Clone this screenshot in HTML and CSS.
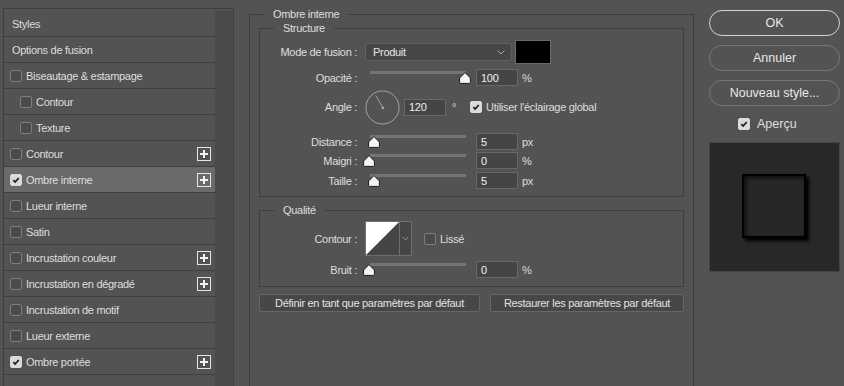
FILE: index.html
```html
<!DOCTYPE html>
<html lang="fr">
<head>
<meta charset="utf-8">
<title>Style de calque</title>
<link rel="stylesheet" href="styles.css">
</head>
<body>
<div class="dialog">
  <aside class="sidebar">
    <ul class="style-list">
      <li class="row plain">Styles</li>
      <li class="row plain">Options de fusion</li>
      <li class="row"><span class="check"></span>Biseautage &amp; estampage</li>
      <li class="row indent"><span class="check"></span>Contour</li>
      <li class="row indent"><span class="check"></span>Texture</li>
      <li class="row"><span class="check"></span>Contour<span class="plus"></span></li>
      <li class="row active"><span class="check on"><svg viewBox="0 0 12 12"><path d="M2.8 6.2 L5 8.4 L9.3 3.6"/></svg></span>Ombre interne<span class="plus"></span></li>
      <li class="row"><span class="check"></span>Lueur interne</li>
      <li class="row"><span class="check"></span>Satin</li>
      <li class="row"><span class="check"></span>Incrustation couleur<span class="plus"></span></li>
      <li class="row"><span class="check"></span>Incrustation en dégradé<span class="plus"></span></li>
      <li class="row"><span class="check"></span>Incrustation de motif</li>
      <li class="row"><span class="check"></span>Lueur externe</li>
      <li class="row"><span class="check on"><svg viewBox="0 0 12 12"><path d="M2.8 6.2 L5 8.4 L9.3 3.6"/></svg></span>Ombre portée<span class="plus"></span></li>
    </ul>
    <div class="scroll"></div>
  </aside>

  <main class="panel">
    <fieldset class="group outer">
      <legend>Ombre interne</legend>
      <fieldset class="group inner structure">
        <legend>Structure</legend>
        <div class="field f-mode">
          <span class="label">Mode de fusion :</span>
          <div class="select">Produit<svg class="chev" viewBox="0 0 8 5"><path d="M0.5 0.5 L4 4 L7.5 0.5"/></svg></div>
          <span class="swatch"></span>
        </div>
        <div class="field f-opacity">
          <span class="label">Opacité :</span>
          <div class="slider"><span class="track"></span><svg class="thumb" style="left:94px" viewBox="0 0 12 12"><path d="M6 0.6 L11.4 6 V10.4 Q11.4 11.4 10.4 11.4 H1.6 Q0.6 11.4 0.6 10.4 V6 Z"/></svg></div>
          <span class="input">100</span><span class="unit">%</span>
        </div>
        <div class="field f-angle">
          <span class="label">Angle :</span>
          <svg class="dial" viewBox="0 0 36 36"><circle cx="18" cy="18" r="17"/><path d="M18.5 18.5 L11 5.5"/><circle class="dot" cx="18.5" cy="18.5" r="1.4"/></svg>
          <span class="input">120</span><span class="deg">°</span>
          <span class="check on gl"><svg viewBox="0 0 12 12"><path d="M2.8 6.2 L5 8.4 L9.3 3.6"/></svg></span><span class="cb-label">Utiliser l'éclairage global</span>
        </div>
        <div class="field f-distance">
          <span class="label">Distance :</span>
          <div class="slider"><span class="track"></span><svg class="thumb" style="left:3px" viewBox="0 0 12 12"><path d="M6 0.6 L11.4 6 V10.4 Q11.4 11.4 10.4 11.4 H1.6 Q0.6 11.4 0.6 10.4 V6 Z"/></svg></div>
          <span class="input">5</span><span class="unit">px</span>
        </div>
        <div class="field f-choke">
          <span class="label">Maigri :</span>
          <div class="slider"><span class="track"></span><svg class="thumb" style="left:-2px" viewBox="0 0 12 12"><path d="M6 0.6 L11.4 6 V10.4 Q11.4 11.4 10.4 11.4 H1.6 Q0.6 11.4 0.6 10.4 V6 Z"/></svg></div>
          <span class="input">0</span><span class="unit">%</span>
        </div>
        <div class="field f-size">
          <span class="label">Taille :</span>
          <div class="slider"><span class="track"></span><svg class="thumb" style="left:3px" viewBox="0 0 12 12"><path d="M6 0.6 L11.4 6 V10.4 Q11.4 11.4 10.4 11.4 H1.6 Q0.6 11.4 0.6 10.4 V6 Z"/></svg></div>
          <span class="input">5</span><span class="unit">px</span>
        </div>
      </fieldset>

      <fieldset class="group inner quality">
        <legend>Qualité</legend>
        <div class="field f-contour">
          <span class="label">Contour :</span>
          <div class="contour">
            <svg class="curve" viewBox="0 0 33 33"><rect width="33" height="33" fill="#454545"/><polygon points="0,0 33,0 0,33" fill="#ffffff"/></svg>
            <span class="drop"><svg class="chev" viewBox="0 0 8 5"><path d="M0.5 0.5 L4 4 L7.5 0.5"/></svg></span>
          </div>
          <span class="check lisse"></span><span class="cb-label">Lissé</span>
        </div>
        <div class="field f-noise">
          <span class="label">Bruit :</span>
          <div class="slider"><span class="track"></span><svg class="thumb" style="left:-2px" viewBox="0 0 12 12"><path d="M6 0.6 L11.4 6 V10.4 Q11.4 11.4 10.4 11.4 H1.6 Q0.6 11.4 0.6 10.4 V6 Z"/></svg></div>
          <span class="input">0</span><span class="unit">%</span>
        </div>
      </fieldset>

      <div class="defaults">
        <button class="btn-flat b-set">Définir en tant que paramètres par défaut</button>
        <button class="btn-flat b-reset">Restaurer les paramètres par défaut</button>
      </div>
    </fieldset>
  </main>

  <aside class="actions">
    <button class="pill primary">OK</button>
    <button class="pill">Annuler</button>
    <button class="pill">Nouveau style...</button>
    <div class="preview-toggle"><span class="check on"><svg viewBox="0 0 12 12"><path d="M2.8 6.2 L5 8.4 L9.3 3.6"/></svg></span><span>Aperçu</span></div>
    <div class="preview"><div class="sample"></div></div>
  </aside>
</div>
</body>
</html>
```
FILE: styles.css
```css
* { box-sizing: border-box; }
html, body { margin: 0; height: 100%; overflow: hidden; }
body {
  background: #535353;
  font-family: "Liberation Sans", Arial, sans-serif;
  font-size: 11px;
  letter-spacing: -0.3px;
  color: #dedede;
}
.dialog { display: flex; align-items: flex-start; padding-left: 3px; }

/* ---------- sidebar ---------- */
.sidebar {
  width: 231px;
  height: 400px;
  margin-top: 8px;
  border: 1px solid #3f3f3f;
  padding-top: 2px;
  display: flex;
  flex-shrink: 0;
}
.style-list { list-style: none; margin: 0; padding: 0; width: 211px; }
.scroll { width: 18px; background: #4a4a4a; }
.row {
  height: 26px;
  border-bottom: 1px solid #3e3e3e;
  display: flex;
  align-items: center;
  gap: 4px;
  padding-left: 6px;
  white-space: nowrap;
}
.row.plain { padding-left: 8px; }
.row.indent { padding-left: 16px; }
.row.active { background: #6a6a6a; }

.check {
  width: 12px; height: 12px;
  border: 1px solid #7e7e7e;
  border-radius: 2px;
  background: #4b4b4b;
  flex-shrink: 0;
  display: inline-flex;
}
.check.on { background: #dadada; border-color: #dadada; }
.check svg { width: 10px; height: 10px; }
.check path { fill: none; stroke: #1e1e1e; stroke-width: 2.1; }

.plus {
  margin-left: auto;
  margin-right: 4px;
  width: 14px; height: 14px;
  border: 1px solid #e4e4e4;
  position: relative;
  flex-shrink: 0;
}
.plus::before, .plus::after { content: ""; position: absolute; background: #f2f2f2; }
.plus::before { left: 2px; right: 2px; top: 5px; height: 2px; }
.plus::after { top: 2px; bottom: 2px; left: 5px; width: 2px; }

/* ---------- main panel ---------- */
.panel { margin-left: 15px; margin-top: 7px; width: 445px; flex-shrink: 0; }
fieldset.group {
  margin: 0;
  border: 1px solid #3e3e3e;
  min-width: 0;
}
fieldset.group > legend { padding: 0 9px; line-height: 14px; }
fieldset.outer { padding: 0 9px; height: 400px; }
fieldset.outer > legend { margin-left: 5px; }
fieldset.inner { padding: 0; }
fieldset.inner > legend { margin-left: 14px; }
.structure { padding: 5px 0 7px !important; }
.quality { margin-top: 6px !important; padding: 4px 0 8px !important; }

.field { display: flex; align-items: center; white-space: nowrap; }
.label { width: 97px; margin-right: 8px; text-align: right; flex-shrink: 0; }
.f-mode { height: 24px; }
.f-opacity { height: 17px; margin-top: 5px; }
.f-angle { height: 36px; margin-top: 3px; }
.f-distance { height: 17px; margin-top: 8px; }
.f-choke { height: 17px; margin-top: 2px; }
.f-size { height: 17px; margin-top: 3px; }
.f-contour { height: 35px; }
.f-noise { height: 17px; margin-top: 5px; }

.select {
  width: 147px; height: 18px;
  background: #464646;
  border: 1px solid #606060;
  border-radius: 4px;
  padding-left: 7px;
  display: flex; align-items: center;
  color: #e6e6e6;
}
.chev { width: 8px; height: 5px; }
.chev path { fill: none; stroke: #a8a8a8; stroke-width: 1; }
.select .chev { margin-left: auto; margin-right: 6px; }
.swatch {
  width: 36px; height: 24px; margin-left: 3px;
  background: #000; border: 1px solid #6a6a6a;
}

.slider { width: 111px; height: 17px; position: relative; flex-shrink: 0; }
.track { position: absolute; left: 5px; width: 96px; top: 2px; height: 3px; background: #747474; }
.thumb { position: absolute; top: 3px; width: 12px; height: 12px; }
.thumb path { fill: #f4f4f4; stroke: #1a1a1a; stroke-width: 1; }

.input {
  width: 42px; height: 17px;
  background: #454545;
  border: 1px solid #686868;
  padding-left: 4px;
  display: flex; align-items: center;
  color: #f0f0f0;
  flex-shrink: 0;
}
.unit { margin-left: 4px; }

.dial { width: 35px; height: 35px; flex-shrink: 0; }
.dial circle { fill: none; stroke: #a6a6a6; stroke-width: 1; }
.dial path { stroke: #a6a6a6; stroke-width: 1; }
.dial .dot { fill: #a6a6a6; stroke: none; }
.f-angle .input { margin-left: 4px; }
.deg { margin-left: 6px; }
.check.gl { margin-left: 14px; }
.cb-label { margin-left: 4px; }

.contour {
  width: 47px; height: 35px;
  border: 1px solid #6e6e6e;
  display: flex;
}
.curve { width: 33px; height: 33px; display: block; }
.drop {
  flex: 1;
  border-left: 1px solid #6e6e6e;
  background: #464646;
  display: flex; align-items: center; justify-content: center;
}
.drop .chev { width: 7px; }
.check.lisse { margin-left: 12px; }

.defaults { display: flex; gap: 10px; margin-top: 7px; }
.btn-flat {
  height: 18px;
  padding: 0;
  background: #474747;
  border: 1px solid #666;
  border-radius: 2px;
  color: #e2e2e2;
  font: inherit;
  letter-spacing: -0.3px;
}
.b-set { width: 221px; }
.b-reset { width: 194px; }

/* ---------- right actions ---------- */
.actions {
  margin-left: 15px;
  width: 131px;
  padding-top: 10px;
  display: flex;
  flex-direction: column;
  flex-shrink: 0;
}
.pill {
  height: 26px;
  border-radius: 13px;
  background: transparent;
  border: 1px solid #767676;
  color: #e8e8e8;
  font-family: "Liberation Sans", Arial, sans-serif;
  font-size: 12.5px;
  letter-spacing: 0;
  padding: 0;
}
.pill + .pill { margin-top: 9px; }
.pill.primary { border: 1.5px solid #d4d4d4; }
.preview-toggle {
  margin-top: 11px;
  height: 14px;
  padding-left: 29px;
  display: flex; align-items: center; gap: 7px;
  font-size: 12.5px;
  letter-spacing: 0;
}
.preview {
  margin-top: 11px;
  width: 131px; height: 130px;
  background: #282828;
  border: 1px solid #444;
  display: flex; align-items: center; justify-content: center;
}
.sample {
  width: 64px; height: 64px;
  margin: 0 2px 2px 0;
  border: 2px solid #000;
  background: #272727;
  box-shadow: 3px 3px 3px #000, inset 2px 2px 4px rgba(0,0,0,0.7);
}
```
